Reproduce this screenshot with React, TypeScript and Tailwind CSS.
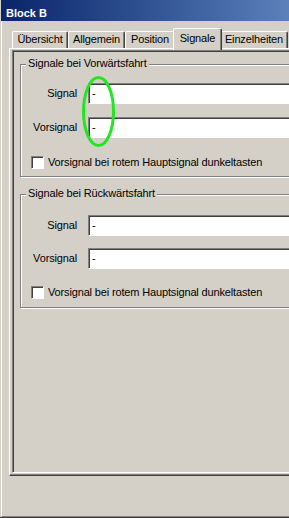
import React from 'react'

const tabs = [
  { label: 'Übersicht', w: 'w-[56px]' },
  { label: 'Allgemein', w: 'w-[57px]' },
  { label: 'Position', w: 'w-[50px]' },
  { label: 'Signale', w: 'w-[45px]', active: true },
  { label: 'Einzelheiten', w: 'w-[68px]' },
]

// eingelassenes Feld im klassischen Windows-Stil
const sunken =
  'border border-t-[#808080] border-l-[#808080] border-b-white border-r-white shadow-[inset_1px_1px_0_#404040]'

function Field({ className = '' }: { className?: string }) {
  return (
    <div className={`h-[21px] w-[220px] bg-white flex items-center pl-[3px] ${sunken} ${className}`}>
      -
    </div>
  )
}

interface GroupProps {
  title: string
  boxClass: string
  gapClass: string
  checkClass: string
}

function Group({ title, boxClass, gapClass, checkClass }: GroupProps) {
  return (
    <div
      className={`relative w-[300px] border border-[#808080] shadow-[inset_1px_1px_0_#fff,1px_1px_0_#fff] ${boxClass}`}
    >
      <span className="absolute left-[5px] top-[-8px] px-[2px] bg-[#d4d0c8] leading-[13px]">{title}</span>

      <div className="flex items-center">
        <span className="w-[56px] text-right leading-[13px]">Signal</span>
        <Field className="ml-[11px]" />
      </div>
      <div className={`flex items-center ${gapClass}`}>
        <span className="w-[56px] text-right leading-[13px]">Vorsignal</span>
        <Field className="ml-[11px]" />
      </div>

      <div className={`flex items-center pl-[10px] h-[13px] ${checkClass}`}>
        <div className={`w-[13px] h-[13px] bg-white shrink-0 ${sunken}`} />
        <span className="ml-[4px] leading-[13px] whitespace-nowrap">Vorsignal bei rotem Hauptsignal dunkeltasten</span>
      </div>
    </div>
  )
}

export default function App() {
  return (
    <div className="relative w-[289px] h-[518px] overflow-hidden bg-[#d4d0c8] border-b border-b-[#404040] text-black text-[11px] tracking-[-0.15px] font-['Liberation_Sans',Arial,sans-serif]">
      {/* Titelleiste */}
      <div className="ml-[1px] h-[21px] bg-linear-to-r from-[#0a246a] to-[#5b80ba] text-white font-bold leading-[13px] pl-[5px] pt-[7px] tracking-normal">
        Block B
      </div>

      <div className="ml-[1px] h-[496px] border-l border-l-white border-b border-b-[#808080] pl-[7px] pt-[7px]">
        {/* Reiter */}
        <div className="h-[20px] flex items-end pl-[3px]">
          {tabs.map((t) =>
            t.active ? (
              <div
                key={t.label}
                className="relative z-10 h-[22px] w-[49px] -mx-[2px] -mb-[2px] shrink-0 bg-[#d4d0c8] rounded-t-[2px] border-t border-l border-white border-r border-r-[#404040] shadow-[inset_-1px_0_0_#808080] flex items-center justify-center pb-[3px] leading-[13px]"
              >
                {t.label}
              </div>
            ) : (
              <div
                key={t.label}
                className={`h-[17px] ${t.w} shrink-0 rounded-t-[2px] border-t border-l border-white border-r border-r-[#404040] shadow-[inset_-1px_0_0_#808080] flex items-center justify-center pb-[1px] leading-[13px]`}
              >
                {t.label}
              </div>
            )
          )}
        </div>

        {/* Reiterseite */}
        <div className="w-[330px] h-[428px] bg-[#d4d0c8] border-t border-l border-white border-b border-b-[#404040] shadow-[inset_0_-1px_0_#808080] pt-[1px] pl-[2px]">
          <div className={`w-[320px] h-[423px] pt-[13px] pl-[7px] ${sunken}`}>
            <Group
              title="Signale bei Vorwärtsfahrt"
              boxClass="h-[113px] pt-[18px]"
              gapClass="mt-[13px]"
              checkClass="mt-[18px]"
            />
            <Group
              title="Signale bei Rückwärtsfahrt"
              boxClass="h-[114px] pt-[20px] mt-[17px]"
              gapClass="mt-[12px]"
              checkClass="mt-[17px]"
            />
          </div>
        </div>
      </div>

      {/* grüne Markierung */}
      <svg className="absolute left-[80px] top-[74px] pointer-events-none" width="38" height="76" viewBox="0 0 38 76">
        <ellipse cx="18.5" cy="37.5" rx="15" ry="34" fill="none" stroke="#22e622" strokeWidth="3" />
      </svg>
    </div>
  )
}
